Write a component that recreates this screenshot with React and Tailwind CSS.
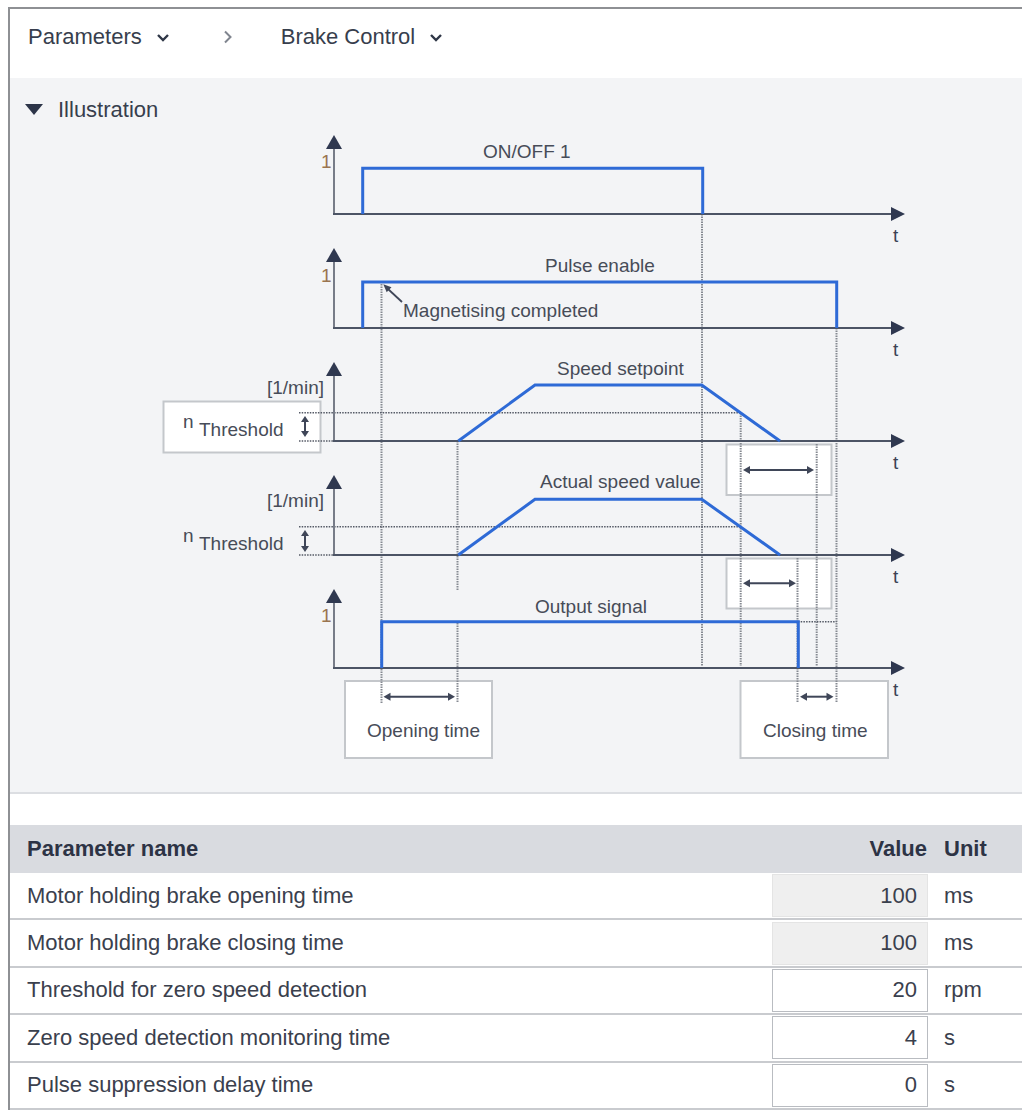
import React from "react";

const BLUE = "#2e6ad6";
const AXIS = "#4c5465";
const HEAD = "#2f3850";
const INK = "#474c58";
const DOT = "#868a92";

const rows = [
  { name: "Motor holding brake opening time", value: "100", unit: "ms", locked: true },
  { name: "Motor holding brake closing time", value: "100", unit: "ms", locked: true },
  { name: "Threshold for zero speed detection", value: "20", unit: "rpm" },
  { name: "Zero speed detection monitoring time", value: "4", unit: "s" },
  { name: "Pulse suppression delay time", value: "0", unit: "s" },
];

const Axis = ({ top, base, label, labelY }) => (
  <g>
    <line x1="334" x2="334" y1={top + 12} y2={base} stroke="#777c88" strokeWidth="2" />
    <polygon points={`334,${top} 326,${top + 14} 342,${top + 14}`} fill={HEAD} />
    <line x1="333" x2="893" y1={base} y2={base} stroke={AXIS} strokeWidth="2" />
    <polygon points={`905,${base} 891,${base - 7} 891,${base + 7}`} fill={HEAD} />
    <text x="893" y={base + 28} fill="#3b4254">t</text>
    {label === "1" && (
      <text x="321" y={labelY} fill="#9a7450">1</text>
    )}
    {label === "rpm" && (
      <text x="324" y={labelY} textAnchor="end" fill={INK}>[1/min]</text>
    )}
  </g>
);

const VDot = ({ x, y1, y2 }) => (
  <line
    x1={x}
    x2={x}
    y1={y1}
    y2={y2}
    stroke={DOT}
    strokeWidth="2"
    strokeDasharray="1.5 1"
  />
);

const HDot = ({ y, x1, x2 }) => (
  <line x1={x1} x2={x2} y1={y} y2={y} stroke="#555a66" strokeWidth="1.6" strokeDasharray="1.5 1.2" />
);

const HArrow = ({ y, x1, x2 }) => (
  <g fill="#3f4658">
    <line x1={x1 + 5} x2={x2 - 5} y1={y} y2={y} stroke="#3f4658" strokeWidth="2" />
    <polygon points={`${x1},${y} ${x1 + 7},${y - 4} ${x1 + 7},${y + 4}`} />
    <polygon points={`${x2},${y} ${x2 - 7},${y - 4} ${x2 - 7},${y + 4}`} />
  </g>
);

const VArrow = ({ x, y1, y2 }) => (
  <g fill="#3f4658">
    <line x1={x} x2={x} y1={y1 + 4} y2={y2 - 4} stroke="#3f4658" strokeWidth="2" />
    <polygon points={`${x},${y1} ${x - 4},${y1 + 6} ${x + 4},${y1 + 6}`} />
    <polygon points={`${x},${y2} ${x - 4},${y2 - 6} ${x + 4},${y2 - 6}`} />
  </g>
);

const Box = ({ x, y, w, h }) => (
  <rect x={x} y={y} width={w} height={h} fill="#ffffff" stroke="#c4c7cb" strokeWidth="2" />
);

const Diagram = () => (
  <svg width="1012" height="670" className="block">
    <g transform="translate(-10,-122)" fontSize="19" fill={INK} fontFamily="'Liberation Sans', Arial, sans-serif">
      {/* white boxes behind everything */}
      <Box x={163.5} y={401.5} w={157} h={51} />
      <Box x={726.5} y={444.5} w={105} h={50.5} />
      <Box x={726.5} y={558.5} w={105} h={50} />
      <Box x={345} y={681} w={147} h={77} />
      <Box x={740.5} y={681} w={147.5} h={77} />

      {/* guides */}
      <VDot x={381.5} y1={284} y2={703} />
      <VDot x={457.5} y1={441} y2={590} />
      <VDot x={457.5} y1={623} y2={703} />
      <VDot x={702} y1={214} y2={666} />
      <VDot x={740.7} y1={413} y2={666} />
      <VDot x={797.5} y1={558} y2={703} />
      <VDot x={816.7} y1={444} y2={666} />
      <VDot x={836.5} y1={328} y2={703} />
      <HDot y={621.7} x1={798} x2={836.5} />

      <HDot y={412.7} x1={299} x2={740.7} />
      <HDot y={441} x1={299} x2={334} />
      <HDot y={526.7} x1={299} x2={740.7} />
      <HDot y={555} x1={299} x2={334} />

      <Axis top={135} base={214} label="1" labelY={168} />
      <Axis top={248} base={328} label="1" labelY={282} />
      <Axis top={362} base={441} label="rpm" labelY={394} />
      <Axis top={475} base={555} label="rpm" labelY={507} />
      <Axis top={589} base={668} label="1" labelY={622} />

      {/* signals */}
      <g fill="none" stroke={BLUE} strokeWidth="3" strokeLinejoin="miter">
        <polyline points="362.7,214 362.7,168.3 702.7,168.3 702.7,214" />
        <polyline points="362.7,328 362.7,282 836.7,282 836.7,328" />
        <polyline points="458.3,441 535,385 701.7,385 780,441" />
        <polyline points="458.3,555 535,499.3 701.7,499.3 780,555" />
        <polyline points="381.7,668 381.7,621.7 798.3,621.7 798.3,668" />
      </g>

      {/* labels */}
      <text x="483" y="158">ON/OFF 1</text>
      <text x="545" y="272">Pulse enable</text>
      <text x="403" y="317">Magnetising completed</text>
      <text x="557" y="375">Speed setpoint</text>
      <text x="540" y="488">Actual speed value</text>
      <text x="535" y="613">Output signal</text>
      <text x="367" y="737">Opening time</text>
      <text x="763" y="737">Closing time</text>

      <text x="183" y="428">n</text>
      <text x="199" y="436">Threshold</text>
      <text x="183" y="542">n</text>
      <text x="199" y="550">Threshold</text>

      <VArrow x={305} y1={416} y2={437} />
      <VArrow x={305} y1={530} y2={552} />

      <HArrow y={470} x1={743} x2={814} />
      <HArrow y={583.3} x1={743} x2={796} />
      <HArrow y={696.7} x1={383.5} x2={455} />
      <HArrow y={696.7} x1={800} x2={833.5} />

      {/* magnetising pointer */}
      <line x1="402" y1="302" x2="388" y2="289" stroke="#3f4658" strokeWidth="1.8" />
      <polygon points="383.3,284.3 391.5,287.3 386.7,292.3" fill="#3f4658" />
    </g>
  </svg>
);

const Chevron = () => (
  <svg width="14" height="9" viewBox="0 0 14 9">
    <path d="M2 2 L7 7 L12 2" fill="none" stroke="#2f3747" strokeWidth="2.4" />
  </svg>
);

export default function App() {
  return (
    <div className="w-[1022px] h-[1112px] overflow-hidden bg-white font-['Liberation_Sans',Arial,sans-serif]">
      <div className="mt-[7px] ml-[8px] border-t-2 border-l-2 border-[#8e9094]">
        {/* breadcrumb */}
        <div className="h-[69px] pt-[15px] pl-[18px] flex items-start text-[22px] leading-[26px] text-[#373e4d]">
          <span>Parameters</span>
          <span className="ml-[14px] mt-[9px]"><Chevron /></span>
          <svg width="10" height="14" viewBox="0 0 10 14" className="ml-[53px] mt-[6px]">
            <path d="M2 1.5 L7.5 7 L2 12.5" fill="none" stroke="#80858f" strokeWidth="2" />
          </svg>
          <span className="ml-[48px]">Brake Control</span>
          <span className="ml-[14px] mt-[9px]"><Chevron /></span>
        </div>

        {/* illustration */}
        <div className="bg-[#f3f4f6] border-b-2 border-[#dcdee2]">
          <div className="h-[44px] pt-[19px] pl-[15px] flex items-start">
            <svg width="18" height="12" viewBox="0 0 18 12" className="mt-[7px]">
              <polygon points="0,0 18,0 9,11" fill="#2c3448" />
            </svg>
            <span className="ml-[15px] text-[22px] leading-[26px] text-[#373e4d]">Illustration</span>
          </div>
          <Diagram />
        </div>

        <div className="h-[31px]" />

        {/* parameter table */}
        <div className="text-[22px] leading-[26px]">
          <div className="h-[48px] flex items-center bg-[#d9dbe0] font-bold text-[#2d3345]">
            <div className="flex-1 pl-[17px]">Parameter name</div>
            <div className="w-[156px] text-right pr-[1px]">Value</div>
            <div className="w-[94px] pl-[16px]">Unit</div>
          </div>
          {rows.map((r) => (
            <div key={r.name} className="h-[47.4px] flex items-center border-b-2 border-[#c9cbcf] text-[#3a404d]">
              <div className="flex-1 pl-[17px]">{r.name}</div>
              <div
                className={
                  r.locked
                    ? "w-[156px] h-[43px] flex items-center justify-end pr-[10px] bg-[#efefef] border border-[#e4e4e4]"
                    : "w-[156px] h-[43px] flex items-center justify-end pr-[10px] bg-white border border-[#b9bcc1]"
                }
              >
                {r.value}
              </div>
              <div className="w-[94px] pl-[16px]">{r.unit}</div>
            </div>
          ))}
        </div>
      </div>
    </div>
  );
}
